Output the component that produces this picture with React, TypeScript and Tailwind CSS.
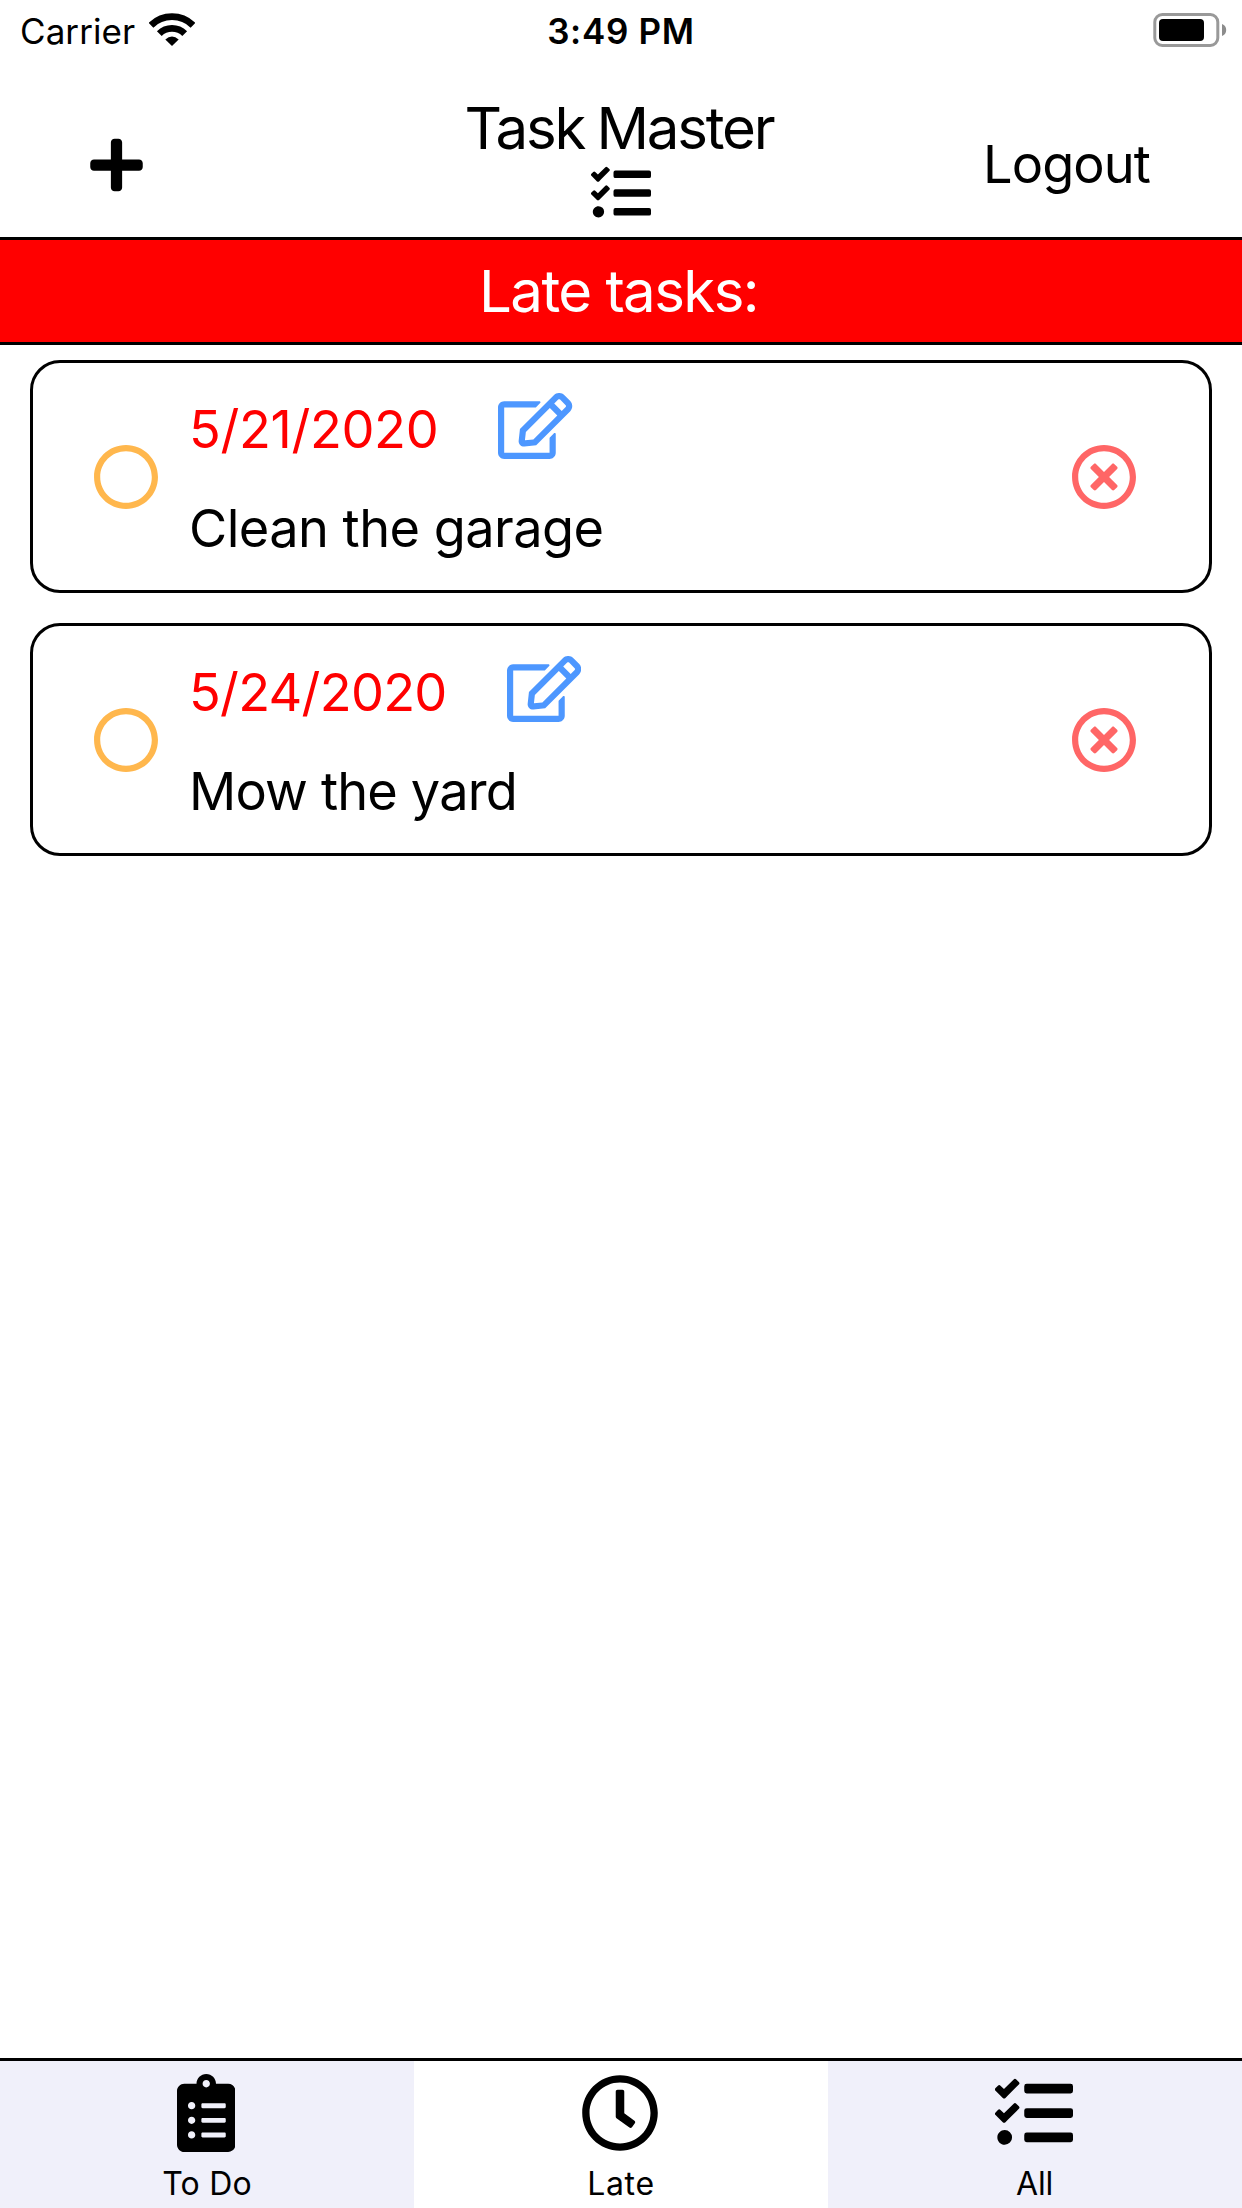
import React from "react";
import {
  FaClipboardList,
  FaPlus,
  FaRegCircle,
  FaRegClock,
  FaRegEdit,
  FaRegTimesCircle,
  FaTasks,
} from "react-icons/fa";

type Task = { date: string; title: string; dateClass: string; titleClass: string };

const tasks: Task[] = [
  {
    date: "5/21/2020",
    title: "Clean the garage",
    dateClass: "tracking-[-0.35px]",
    titleClass: "tracking-[-0.54px]",
  },
  {
    date: "5/24/2020",
    title: "Mow the yard",
    dateClass: "tracking-[-0.72px]",
    titleClass: "tracking-[-0.82px]",
  },
];

function WifiIcon() {
  return (
    <svg className="h-[33px] w-[46px]" viewBox="0 0 46 33" fill="none" stroke="#000">
      <path d="M2 12.2A30 30 0 0 1 44 12.2" strokeWidth="6.8" />
      <path d="M10.3 20.6A18.2 18.2 0 0 1 35.7 20.6" strokeWidth="6.8" />
      <path d="M16.3 26.4Q23 20.4 29.7 26.4L23 33Z" fill="#000" stroke="none" />
    </svg>
  );
}

function BatteryIcon() {
  return (
    <svg className="h-[34px] w-[74px]" viewBox="0 0 74 34">
      <rect x="1.8" y="1.5" width="63" height="31" rx="7.5" fill="none" stroke="#999" strokeWidth="3" />
      <rect x="6" y="6" width="45" height="22" rx="4" fill="#000" />
      <path d="M69 11A6.4 6.4 0 0 1 69 23Z" fill="#8c8c8c" />
    </svg>
  );
}

function StatusBar() {
  return (
    <div className="grid h-[60px] grid-cols-3 text-[35px] leading-[62px]">
      <div className="flex pl-5">
        <span className="tracking-[0.07px]">Carrier</span>
        <span className="mt-[13px] ml-[14px]">
          <WifiIcon />
        </span>
      </div>
      <div className="text-center font-semibold tracking-[0.7px]">3:49 PM</div>
      <div className="flex justify-end pt-[13px] pr-[15px]">
        <BatteryIcon />
      </div>
    </div>
  );
}

function Header() {
  return (
    <header className="grid h-[177px] grid-cols-3">
      <button className="mt-[75px] ml-[90px] h-[60px] w-[53px]">
        <FaPlus className="h-[60px] w-[53px]" />
      </button>
      <div className="flex flex-col items-center pt-8">
        <h1 className="mr-1 text-[58.2px] leading-[72px] tracking-[-2.2px] whitespace-nowrap [word-spacing:-2px]">
          Task Master
        </h1>
        <FaTasks className="-mt-[1px] size-[60px]" />
      </div>
      <div className="flex justify-end pt-[74px] pr-[92px]">
        <button className="h-[60px] text-[52.3px] leading-[60px] tracking-[-0.9px]">Logout</button>
      </div>
    </header>
  );
}

function TaskCard({ task }: { task: Task }) {
  return (
    <li className="flex h-[233px] rounded-[30px] border-[3px] border-black pr-[72px] pl-[60px] text-[52.3px]">
      <FaRegCircle className="mt-[81px] size-[66px] shrink-0 text-[#ffb74d]" />
      <div className="ml-[30px] flex-1 pt-[30px]">
        <div className="flex h-[66px]">
          <span className={`leading-[72px] text-[#ff0000] ${task.dateClass}`}>{task.date}</span>
          <FaRegEdit className="ml-[60px] h-[66px] w-[74.25px] text-[#4d97ff]" />
        </div>
        <p className={`mt-9 leading-[66px] ${task.titleClass}`}>{task.title}</p>
      </div>
      <FaRegTimesCircle className="mt-[81px] size-[66px] shrink-0 text-[#ff6666]" />
    </li>
  );
}

function TabBar() {
  return (
    <nav className="grid h-[150px] grid-cols-3 border-t-[3px] border-black text-[32px] leading-[48px]">
      <div className="flex flex-col items-center bg-[#f0f0fa] pt-[13px]">
        <FaClipboardList className="mr-[2px] h-[78px] w-[58.5px]" />
        <span className="mt-2 tracking-[0.2px]">To Do</span>
      </div>
      <div className="flex flex-col items-center bg-white pt-[13px]">
        <FaRegClock className="mr-[2px] size-[78px]" />
        <span className="mt-2 tracking-[0.7px]">Late</span>
      </div>
      <div className="flex flex-col items-center bg-[#f0f0fa] pt-[13px]">
        <FaTasks className="mr-[2px] size-[78px]" />
        <span className="mt-2 mr-px tracking-[-0.2px]">All</span>
      </div>
    </nav>
  );
}

export default function App() {
  return (
    <div className="flex h-[2208px] w-[1242px] flex-col bg-white font-['Inter',sans-serif] text-black">
      <StatusBar />
      <Header />
      <div className="h-[108px] border-y-[3px] border-black bg-[#ff0000] text-center text-[58.2px] leading-[103px] tracking-[-1.6px] text-white">
        <span className="mr-[5px]">Late tasks:</span>
      </div>
      <ul className="flex flex-1 flex-col gap-[30px] px-[30px] pt-[15px]">
        {tasks.map((task) => (
          <TaskCard key={task.date} task={task} />
        ))}
      </ul>
      <TabBar />
    </div>
  );
}
